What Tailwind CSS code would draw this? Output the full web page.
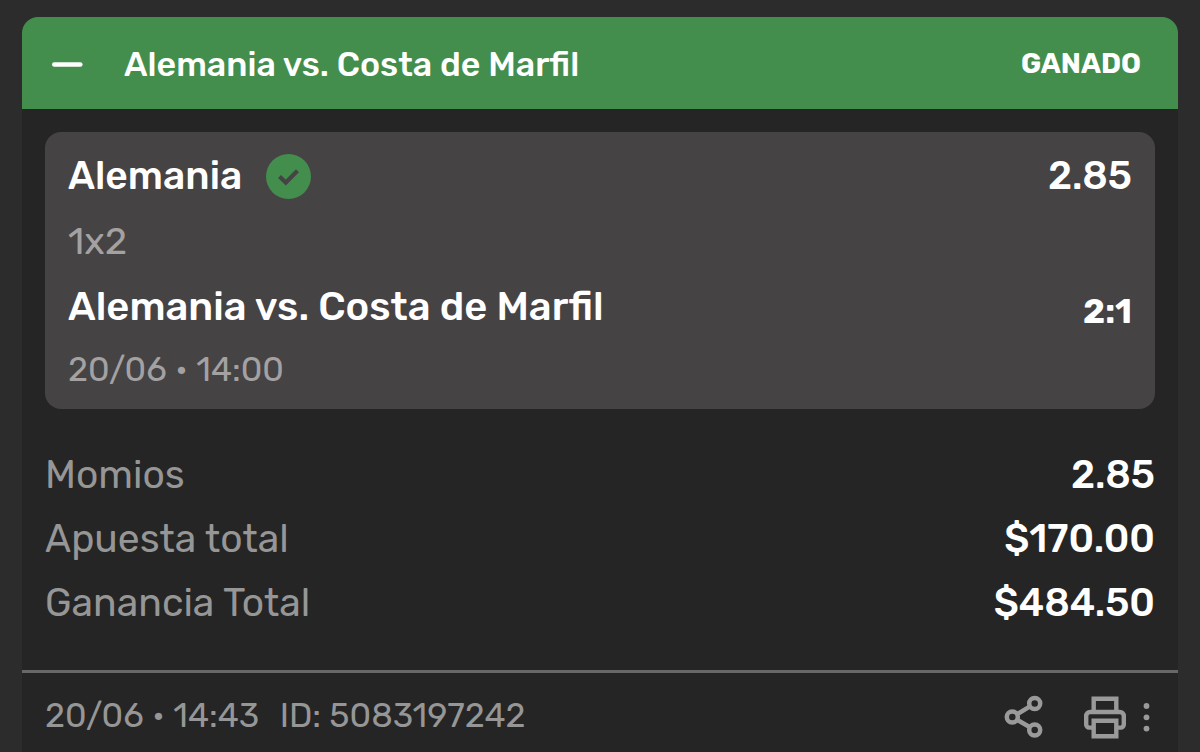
<!DOCTYPE html>
<html lang="es">
<head>
    <meta charset="UTF-8">
    <meta name="viewport" content="width=device-width, initial-scale=1.0">
    <title>Boleto de apuesta</title>
    <script src="https://cdn.jsdelivr.net/npm/@tailwindcss/browser@4"></script>
    <style>
        body { font-family: 'Rubik', 'Roboto', 'Liberation Sans', sans-serif; }
    </style>
</head>
<body class="bg-[#2c2c2c] min-h-screen px-[22px] pt-[17px] overflow-hidden">
    <article class="bg-[#252525] rounded-t-2xl overflow-hidden min-h-[calc(100vh-17px)]">
        <header class="flex items-center bg-[#438e4d] text-white h-[92px] pt-[2px] pl-[30px] pr-[37px]">
            <button type="button" aria-label="Contraer" class="mr-10">
                <svg class="w-8 h-8" viewBox="0 0 32 32" fill="none" stroke="currentColor" stroke-width="4.6" stroke-linecap="round"><path d="M2.3 16.5h26"/></svg>
            </button>
            <h1 class="flex-1 text-[34px] font-medium">Alemania vs. Costa de Marfil</h1>
            <span class="text-[28px] font-bold">GANADO</span>
        </header>

        <section class="mx-[23px] mt-[23px] px-[23px] pt-3 pb-[11px] bg-[#464344] rounded-2xl text-white">
            <div class="flex items-center h-16">
                <h2 class="text-[39px] font-medium mr-6">Alemania</h2>
                <svg class="w-[45px] h-[45px]" viewBox="0 0 45 45"><circle cx="22.5" cy="22.5" r="22.5" fill="#438e4d"/><path d="M13.5 22.5l6.3 6L31.5 16.7" fill="none" stroke="#464344" stroke-width="4.2"/></svg>
                <span class="ml-auto text-[39px] font-medium">2.85</span>
            </div>
            <p class="h-16 leading-[66px] text-[38px] text-[#a3a1a2]">1x2</p>
            <div class="flex items-center justify-between h-[70px]">
                <p class="text-[40px] font-medium">Alemania vs. Costa de Marfil</p>
                <span class="pt-2 text-[34px] font-bold">2:1</span>
            </div>
            <p class="h-14 leading-[56px] text-[34px] text-[#a3a1a2]">20/06 • 14:00</p>
        </section>

        <dl class="mx-[23px] mt-[34px] text-[39px] leading-[64px]">
            <div class="flex justify-between"><dt class="text-[#969696]">Momios</dt><dd class="font-medium text-white">2.85</dd></div>
            <div class="flex justify-between"><dt class="text-[#969696]">Apuesta total</dt><dd class="font-medium text-white">$170.00</dd></div>
            <div class="flex justify-between"><dt class="text-[#969696]">Ganancia Total</dt><dd class="font-medium text-white">$484.50</dd></div>
        </dl>

        <footer class="flex items-center mt-[35px] pl-[23px] pr-7 h-[90px] border-t-3 border-[#686868] text-[34px] text-[#969696]">
            <p class="pb-[3px]">
                <span>20/06 • 14:43</span>
                <span class="ml-3">ID: 5083197242</span>
            </p>
            <div class="ml-auto flex items-center">
                <button type="button" aria-label="Compartir" class="mr-10">
                    <svg class="w-10 h-11" viewBox="0 0 40 44" fill="none" stroke="#9a9a9a" stroke-width="4.5">
                        <circle cx="30.7" cy="8.5" r="5.5"/>
                        <circle cx="8.3" cy="22" r="5.5"/>
                        <circle cx="30.7" cy="35" r="5.5"/>
                        <path d="M13 19.2l13-7.8M13 24.8l13 7.4"/>
                    </svg>
                </button>
                <button type="button" aria-label="Imprimir" class="mr-4">
                    <svg class="w-[42px] h-11" viewBox="0 0 42 44" fill="none" stroke="#9a9a9a" stroke-width="4.4">
                        <path d="M9.7 17V3.7h22.6V17"/>
                        <path d="M9 32.6H5.2a3 3 0 0 1-3-3V21a4 4 0 0 1 4-4h29.6a4 4 0 0 1 4 4v8.600a3 3 0 0 1-3 3H33"/>
                        <path d="M9.7 25.700h22.6v15.600h-22.6z"/>
                    </svg>
                </button>
                <button type="button" aria-label="Más opciones">
                    <svg class="w-2 h-11" viewBox="0 0 8 44" fill="#9a9a9a">
                        <circle cx="4.500" cy="11" r="2.900"/>
                        <circle cx="4.500" cy="22.300" r="2.900"/>
                        <circle cx="4.500" cy="33.600" r="2.900"/>
                    </svg>
                </button>
            </div>
        </footer>
    </article>
</body>
</html>
